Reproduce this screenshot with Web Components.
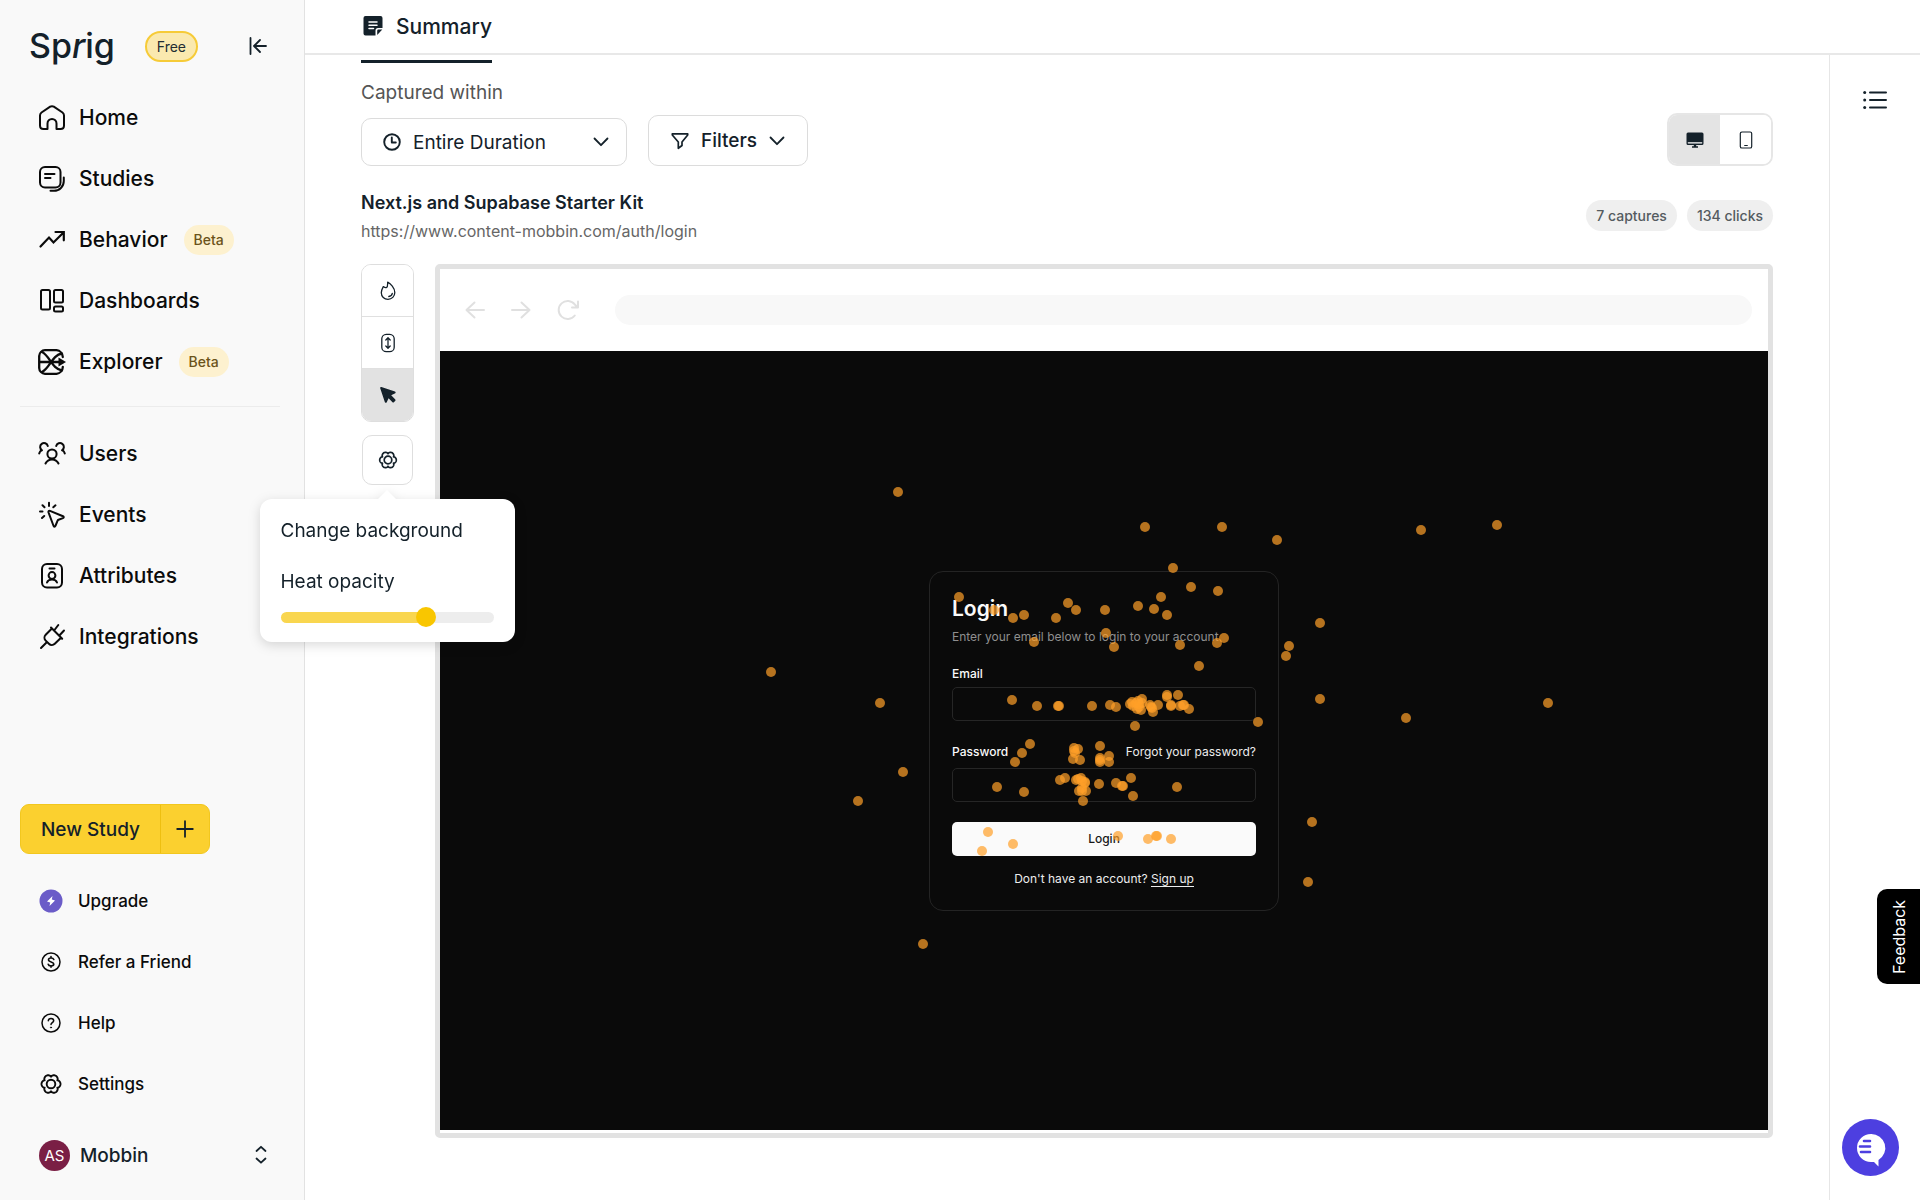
<!DOCTYPE html>
<html lang="en">
<head>
<meta charset="utf-8">
<meta name="viewport" content="width=device-width, initial-scale=1">
<title>Sprig – Summary</title>
<style>
  html, body { margin: 0; }
  body { font-family: Inter, "Liberation Sans", sans-serif; color: #14212a; background: #fff; }
</style>
</head>
<body>
<sprig-app></sprig-app>

<script>
/* Six-lobed outline shared by every settings icon. */
function gearPath(c, radius, wave) {
  let d = '';
  for (let i = 0; i < 120; i++) {
    const t = i * Math.PI / 60;
    const r = radius + wave * Math.pow(Math.abs(Math.cos(3 * t)), .7);
    d += (i ? 'L' : 'M') + (c + r * Math.cos(t)).toFixed(2) + ' ' + (c + r * Math.sin(t)).toFixed(2);
  }
  return d + 'Z';
}

/* name: [viewBox width, viewBox height, stroke width, markup] */
const ICONS = {
  home: [26, 26, 2, '<path d="M1 10.6Q1 8.6 2.5 7.5L11.2 1.7Q13 .6 14.8 1.7L23.5 7.5Q25 8.6 25 10.6V20.5Q25 24 21.500 24H17.500V18.500A4.500 4.500 0 0 0 8.500 18.500V24H4.500Q1 24 1 20.500Z"/>'],
  studies: [26, 26, 2, '<rect x="1" y="1" width="20.500" height="20.500" rx="5"/><path d="M6 8H15.500M6 12H11.500M24.800 11.500V15A9.800 9.800 0 0 1 15 24.800H11.500"/>'],
  behavior: [26, 26, 2.2, '<path stroke-linejoin="miter" d="M1.500 19.500L10 10.500L14.500 15.500L24 6M16.500 5H24.800V13.300"/>'],
  dashboards: [26, 26, 2, '<rect x="2" y="2" width="9" height="19.500" rx="1.500"/><rect x="15" y="2" width="9" height="12.500" rx="1.500"/><rect x="15" y="18.500" width="9" height="5" rx="1.500"/>'],
  explorer: [28, 26, 2.3, '<path d="M24.800 8A7 7 0 0 0 18.500 1.200H7A6 6 0 0 0 1.200 7V19A6 6 0 0 0 7 24.800H18.500A7 7 0 0 0 24.800 18M1.200 13H22M4 3C12 7 14 20 24 21.500M4 23C12 19 14 6 24 4.500"/><path fill="currentColor" stroke="none" d="M20.500 8.500L28 13L20.500 17.500Z"/>'],
  users: [28, 26, 2, '<circle cx="14" cy="13" r="4.600"/><path d="M7.500 22.500C10 17 18 17 20.500 22.500M1.200 12.500C1.600 10.500 2.500 9.700 4 9.300A3.900 3.900 0 1 1 9.800 5M26.800 12.500C26.400 10.500 25.500 9.700 24 9.300A3.900 3.900 0 1 0 18.200 5"/>'],
  events: [26, 26, 2, '<path d="M9.500 10.300C9.200 9.200 10 8.500 11 8.900L24 14.200C25 14.700 25 15.700 24 16.100L19.500 17.700C19 17.900 18.800 18.100 18.600 18.600L16.600 23.500C16 25 14.800 25 14.400 23.500ZM1 9.500H3.500M3.500 3.300L5.500 5.200M10 .8V4M16.500 3.300L14.300 5.300M3 16L5.200 14"/>'],
  attributes: [26, 26, 2, '<rect x="3" y="1" width="20" height="23.500" rx="5"/><path d="M10.500 5.500H15.500M8 19.500C9.500 15.500 16.500 15.500 18 19.500"/><circle cx="13" cy="12.500" r="3.400"/>'],
  integrations: [26, 26, 2, '<path d="M12 3.500L23.200 14.700M12.900 4.500L6.700 10.700A4.200 4.200 0 0 0 6.700 16.600L9.900 19.800A4.200 4.200 0 0 0 15.800 19.800L22 13.800M2 24L7.500 18.500M15.500 6L19.300 1M20.800 11L25 6.500"/>'],
  collapse: [18, 18, 1.800, '<path d="M1.500 1V17M17 9H5.500M11 3L5 9L11 15"/>'],
  upgrade: [24, 24, 0, '<circle cx="12" cy="12" r="11.500" fill="#6b5cc8"/><path fill="#fff" d="M13.500 7L8 12.500L11.200 13.500L10.500 17L16 11.500L12.800 10.500Z"/>'],
  refer: [24, 24, 1.500, '<circle cx="12" cy="12" r="9"/><path stroke-width="1.600" d="M14.800 9.500C14 7.300 9.500 7.500 9.500 9.800C9.500 12.500 14.800 11.300 14.800 14C14.800 16.500 9.800 16.700 9.200 14.300M12 6.500V8M12 15.800V17.300"/>'],
  help: [24, 24, 1.500, '<circle cx="12" cy="12" r="9"/><path d="M9.300 9.800C9.500 6.500 14.700 6.800 14.700 9.700C14.700 11.500 12 11.800 12 13.500"/><circle cx="12" cy="16.500" r=".6" fill="currentColor" stroke-width=".8"/>'],
  settings: [24, 24, 1.900, '<path d="' + gearPath(12, 7.300, 2.200) + '"/><circle cx="12" cy="12" r="4.300"/>'],
  gear: [20, 20, 1.700, '<path d="' + gearPath(10, 6.300, 2) + '"/><circle cx="10" cy="10" r="3.800"/>'],
  updown: [12, 20, 1.800, '<path d="M1.500 6L6 1.800L10.500 6M1.500 13.500L6 17.700L10.500 13.500"/>'],
  plus: [18, 18, 1.800, '<path d="M9 1.200V16.800M1.200 9H16.800"/>'],
  note: [20, 20, 0, '<path fill="currentColor" d="M2.500 0H17.500Q19.500 0 19.500 2V12H15Q12.500 12 12.500 14.500V19.500H2.500Q.5 19.500 .5 17.500V2Q.5 0 2.500 0ZM14.200 19V14.800Q14.200 13.600 15.400 13.600H19.300Z"/><path stroke="#fff" stroke-width="1.500" d="M6 6H14M6 9.300H14M6 12.600H10.500"/>'],
  clock: [18, 18, 1.900, '<circle cx="9" cy="9" r="7.800"/><path d="M8.800 4.500V9.500H12.800"/>'],
  chevron: [16, 10, 1.800, '<path d="M1.500 1.500L8 8.200L14.500 1.500"/>'],
  funnel: [18, 18, 1.700, '<path d="M1.300 1.800H16.700V3L11 10V13.500L7.300 16.300V10L1.300 3Z"/>'],
  desktop: [18, 18, 0, '<path fill="currentColor" d="M2 1.500H16Q17.500 1.500 17.500 3V12.500Q17.500 14 16 14H10.200V15.300H12V16.800H6V15.300H7.800V14H2Q.5 14 .5 12.500V3Q.5 1.500 2 1.500Z"/><path stroke="#fff" stroke-width="1.300" d="M2.300 11.800H15.700"/>'],
  phone: [18, 18, 1.200, '<rect x="3.300" y="1" width="11.400" height="16" rx="1.600"/><path d="M7.700 14.500H10.300"/>'],
  flame: [18, 20, 1.300, '<path d="M4.300 5.600C5.500 6.500 6.700 7 7.600 6.500C9 5.500 8.500 2.800 8.700 1.200C11.500 2.500 15.800 7 15.800 11.500C15.800 15.500 12.800 18.300 9 18.300C5.200 18.300 2.300 15.500 2.300 11.800C2.300 9.500 3.200 7.600 4.300 5.600ZM9.800 15.500C11.800 15.300 13 14.200 13.300 12.400"/>'],
  scroll: [18, 20, 1.300, '<rect x="2.800" y="1.300" width="12.400" height="17.400" rx="4.500"/><path d="M9 5.200V14.800M6.800 7L9 4.800L11.200 7M6.800 13L9 15.200L11.200 13"/>'],
  cursor: [18, 18, 0, '<path fill="currentColor" d="M1.200 2.200Q.9 .8 2.400 1L16 5.600Q17.300 6.300 16.300 7.300L12.200 9.300L16.300 13.400Q16.900 14.200 16.300 14.800L14.900 16.200Q14.200 16.800 13.500 16.200L9.600 12.300L7.600 16.400Q6.800 17.300 5.900 16.200Z"/>'],
  back: [20, 18, 2, '<path d="M19 9H1.500M9.500 1.500L1.500 9L9.500 16.500"/>'],
  forward: [20, 18, 2, '<path d="M1 9H18.500M10.500 1.500L18.500 9L10.500 16.500"/>'],
  reload: [22, 20, 2, '<path d="M17.800 15.500A9 9 0 1 1 17.800 4.500L20 6.700M21 1.500V7.500H15"/>'],
  list: [24, 20, 2, '<path d="M7 2.500H23M7 10H23M7 17.500H23"/><g fill="currentColor" stroke="none"><circle cx="1.700" cy="2.500" r="1.500"/><circle cx="1.700" cy="10" r="1.500"/><circle cx="1.700" cy="17.500" r="1.500"/></g>'],
  chat: [30, 34, 0, '<path fill="#fff" d="M15 1A14 14 0 0 1 22.500 27V33.500L18 29H15A14 14 0 0 1 15 1Z"/><path stroke="#4d3fe0" stroke-width="2.600" d="M8 8H14M4 13.500H14M5 19H14"/>']
};

function define(name, html, setup) {
  const template = document.createElement('template');
  template.innerHTML = html;
  customElements.define(name, class extends HTMLElement {
    constructor() {
      super();
      this.attachShadow({ mode: 'open' }).append(template.content.cloneNode(true));
    }
    connectedCallback() {
      if (setup && !this.ready) { this.ready = true; setup(this, this.shadowRoot); }
    }
  });
}

define('ui-icon', `<style>
  :host { display: inline-flex; flex: none; }
  svg { display: block; overflow: visible; }
</style>`, (host, root) => {
  const [w, h, stroke, markup] = ICONS[host.getAttribute('name')];
  root.innerHTML += `<svg width="${w}" height="${h}" viewBox="0 0 ${w} ${h}" fill="none" stroke="${stroke ? 'currentColor' : 'none'}" stroke-width="${stroke}" stroke-linecap="round" stroke-linejoin="round" aria-hidden="true">${markup}</svg>`;
});

define('nav-link', `<style>
  :host { display: block; }
  a { display: flex; align-items: center; height: 61px; padding-left: 39px; gap: 14px; color: #0b0b0b; text-decoration: none; font-size: 21px; font-weight: 500; }
  .glyph { display: flex; justify-content: center; width: 26px; }
  :host([small]) a { font-size: 17px; gap: 15px; }
  :host([small]) .glyph { width: 24px; }
  .badge { padding: 0 10px; line-height: 30px; border-radius: 15px; background: #fdf1cf; color: #6b531a; font-size: 14px; margin-left: 2px; }
</style>
<a href="#"><span class="glyph"><slot name="icon"></slot></span><slot></slot></a>`, (host, root) => {
  const badge = host.getAttribute('badge');
  if (badge) {
    const el = document.createElement('span');
    el.className = 'badge';
    el.textContent = badge;
    root.querySelector('a').append(el);
  }
});

define('brand-header', `<style>
  :host { display: flex; align-items: center; height: 32px; padding: 30px 37px 25px 29px; }
  .logo { color: #14212a; text-decoration: none; font-size: 34px; line-height: 32px; font-weight: 500; }
  .logo i { font-weight: 500; }
  .plan { margin-left: 30px; box-sizing: border-box; height: 31px; line-height: 28px; padding: 0 10px; border: 2px solid #f6cb38; border-radius: 16px; background: #fae9af; font-size: 14px; color: #222c33; }
  button { margin-left: auto; padding: 0; border: 0; background: none; color: #14212a; display: flex; }
</style>
<a class="logo" href="#">Sp<i>r</i>ig</a><span class="plan">Free</span>
<button aria-label="Collapse sidebar"><ui-icon name="collapse"></ui-icon></button>`);

define('new-study', `<style>
  :host { display: flex; align-self: flex-start; margin: 0 20px 16px; border: 1px solid #f2c71e; border-radius: 9px; background: #fbd02f; overflow: hidden; }
  button { height: 48px; border: 0; background: none; font: 500 19px Inter, sans-serif; color: #14212a; display: flex; align-items: center; justify-content: center; padding: 0; }
  .main { width: 139px; }
  .more { width: 49px; border-left: 1px solid #eebf10; }
</style>
<button class="main">New Study</button><button class="more" aria-label="More study types"><ui-icon name="plus"></ui-icon></button>`);

define('account-row', `<style>
  :host { display: block; padding-bottom: 4px; }
  button { width: 100%; height: 82px; display: flex; align-items: center; padding: 0 37px 0 39px; border: 0; background: none; font: 500 19px Inter, sans-serif; color: #14212a; }
  .avatar { width: 31px; line-height: 31px; border-radius: 50%; background: #7a1f45; color: #fff; font-size: 15px; font-weight: 400; margin-right: 10px; }
  ui-icon { margin-left: auto; }
</style>
<button><span class="avatar">AS</span><slot></slot><ui-icon name="updown"></ui-icon></button>`);

define('side-bar', `<style>
  :host { display: flex; flex-direction: column; position: sticky; top: 0; height: 100vh; min-height: 1080px; width: 304px; flex: none; background: #f9f9f9; border-right: 1px solid #e2e2e2; }
  hr { margin: 14px 24px 16px 20px; border: 0; border-top: 1px solid #ececec; }
  footer { margin-top: auto; display: flex; flex-direction: column; }
</style>
<brand-header></brand-header>
<nav>
  <nav-link><ui-icon slot="icon" name="home"></ui-icon>Home</nav-link>
  <nav-link><ui-icon slot="icon" name="studies"></ui-icon>Studies</nav-link>
  <nav-link badge="Beta"><ui-icon slot="icon" name="behavior"></ui-icon>Behavior</nav-link>
  <nav-link><ui-icon slot="icon" name="dashboards"></ui-icon>Dashboards</nav-link>
  <nav-link badge="Beta"><ui-icon slot="icon" name="explorer"></ui-icon>Explorer</nav-link>
  <hr>
  <nav-link><ui-icon slot="icon" name="users"></ui-icon>Users</nav-link>
  <nav-link><ui-icon slot="icon" name="events"></ui-icon>Events</nav-link>
  <nav-link><ui-icon slot="icon" name="attributes"></ui-icon>Attributes</nav-link>
  <nav-link><ui-icon slot="icon" name="integrations"></ui-icon>Integrations</nav-link>
</nav>
<footer>
  <new-study></new-study>
  <nav-link small><ui-icon slot="icon" name="upgrade"></ui-icon>Upgrade</nav-link>
  <nav-link small><ui-icon slot="icon" name="refer"></ui-icon>Refer a Friend</nav-link>
  <nav-link small><ui-icon slot="icon" name="help"></ui-icon>Help</nav-link>
  <nav-link small><ui-icon slot="icon" name="settings"></ui-icon>Settings</nav-link>
  <account-row>Mobbin</account-row>
</footer>`);

define('tab-bar', `<style>
  :host { display: block; height: 53px; border-bottom: 2px solid #e8e8e8; padding-left: 56px; }
  a { display: inline-flex; align-items: center; box-sizing: border-box; height: 63px; padding: 0 0 8px 2px; gap: 13px; border-bottom: 3px solid #14212a; color: #14212a; text-decoration: none; font-size: 21px; font-weight: 500; }
</style>
<a href="#"><ui-icon name="note"></ui-icon><slot></slot></a>`);

define('device-toggle', `<style>
  :host { display: flex; border: 2px solid #e6e6e6; border-radius: 10px; overflow: hidden; }
  button { width: 51px; height: 49px; border: 0; padding: 0; background: #fff; color: #14212a; display: flex; align-items: center; justify-content: center; }
  button[aria-pressed=true] { background: #e4e4e4; }
</style>
<button aria-pressed="true" aria-label="Desktop"><ui-icon name="desktop"></ui-icon></button><button aria-pressed="false" aria-label="Mobile"><ui-icon name="phone"></ui-icon></button>`);

define('filter-bar', `<style>
  :host { display: flex; align-items: flex-end; gap: 21px; }
  .field { display: flex; flex-direction: column; gap: 14px; }
  label { font-size: 19px; line-height: 22px; color: #555; }
  .select { display: grid; grid-template-columns: 22px 18px 1fr 16px 18px; align-items: center; width: 266px; height: 48px; }
  .select ui-icon { grid-row: 1; z-index: 1; pointer-events: none; }
  .clock { grid-column: 2; } .arrow { grid-column: 4; }
  select, .filters { box-sizing: border-box; border: 1px solid #dcdcdc; border-radius: 10px; background: #fff; }
  select { appearance: none; grid-row: 1; grid-column: 1 / -1; width: 100%; height: 48px; padding: 0 44px 0 51px; font: 400 19px Inter, sans-serif; color: #14212a; }
  .filters { display: flex; align-items: center; height: 51px; padding: 0 22px; gap: 12px; font: 500 19px Inter, sans-serif; color: #14212a; }
  device-toggle { margin-left: auto; }
</style>
<div class="field">
  <label for="duration">Captured within</label>
  <div class="select">
    <ui-icon class="clock" name="clock"></ui-icon>
    <select id="duration"><option>Entire Duration</option></select>
    <ui-icon class="arrow" name="chevron"></ui-icon>
  </div>
</div>
<button class="filters"><ui-icon name="funnel"></ui-icon>Filters<ui-icon name="chevron"></ui-icon></button>
<device-toggle></device-toggle>`);

define('page-heading', `<style>
  :host { display: flex; align-items: center; gap: 10px; padding: 23px 0 19px; }
  .names { flex: 1; line-height: 28px; }
  h1 { margin: 0; font-size: 18px; line-height: 28px; font-weight: 600; color: #14212a; }
  a { display: block; font-size: 16px; color: #666; text-decoration: none; }
  ::slotted(span) { line-height: 31px; margin-bottom: 4px; padding: 0 10px; border-radius: 16px; background: #efefef; color: #545b60; font-size: 14px; font-weight: 500; }
</style>
<div class="names"><h1>Next.js and Supabase Starter Kit</h1><a href="#">https://www.content-mobbin.com/auth/login</a></div>
<slot></slot>`);

define('settings-popover', `<style>
  :host { display: block; box-sizing: border-box; width: 255px; height: 143px; padding: 18px 21px; border-radius: 12px; background: #fff; color: #14212a; font-size: 19px; filter: drop-shadow(0 3px 6px rgba(0, 0, 0, .15)); }
  :host::before { content: ""; position: absolute; left: 50%; top: -9px; margin-left: -10px; border: 10px solid transparent; border-top: 0; border-bottom-color: #fff; }
  a { color: inherit; text-decoration: none; display: block; line-height: 28px; margin-bottom: 23px; }
  label { display: block; line-height: 28px; margin-bottom: 11px; }
  input { appearance: none; display: block; width: 100%; height: 20px; margin: 0; background: none; }
  input::-webkit-slider-runnable-track { height: 11px; border-radius: 6px; background: linear-gradient(to right, #f9d64f 68%, #ededed 68%); }
  input::-webkit-slider-thumb { appearance: none; width: 20px; height: 20px; margin-top: -5px; border-radius: 50%; background: #f9c600; }
</style>
<a href="#">Change background</a>
<label for="heat">Heat opacity</label>
<input id="heat" type="range" min="0" max="100" value="70">`);

define('tool-rail', `<style>
  :host { display: flex; flex-direction: column; align-items: center; gap: 13px; width: 53px; flex: none; position: relative; z-index: 2; }
  button { display: flex; align-items: center; justify-content: center; padding: 0; border: 0; background: #fff; color: #14212a; box-sizing: border-box; }
  .group { border: 1px solid #dedede; border-radius: 10px; overflow: hidden; }
  .group button { width: 51px; height: 52px; border-bottom: 1px solid #e0e0e0; }
  .group button:last-child { border: 0; }
  .group button[aria-pressed=true] { background: #e2e2e2; }
  .anchor { position: relative; }
  .anchor > button { width: 51px; height: 50px; border: 1px solid #dedede; border-radius: 10px; }
  settings-popover { position: absolute; top: 64px; left: 50%; margin-left: -128px; }
</style>
<div class="group">
  <button aria-label="Heatmap"><ui-icon name="flame"></ui-icon></button>
  <button aria-label="Scroll map"><ui-icon name="scroll"></ui-icon></button>
  <button aria-label="Click map" aria-pressed="true"><ui-icon name="cursor"></ui-icon></button>
</div>
<div class="anchor">
  <button aria-label="Map settings"><ui-icon name="gear"></ui-icon></button>
  <settings-popover></settings-popover>
</div>`);

define('login-card', `<style>
  :host { display: block; box-sizing: border-box; width: 350px; padding: 23px 22px 22px; border: 1px solid #242424; border-radius: 14px; color: #ededed; font-size: 12px; line-height: 18px; }
  h2 { margin: 0; font-size: 21px; line-height: 28px; font-weight: 600; color: #fafafa; }
  p { margin: 5px 0 19px; color: #8f8f8f; white-space: nowrap; }
  .row { display: flex; justify-content: space-between; }
  label { font-weight: 500; color: #fafafa; }
  a { color: inherit; text-decoration: none; }
  input { display: block; box-sizing: border-box; width: 100%; height: 34px; margin: 4px 0 22px; border: 1px solid #262626; border-radius: 5px; background: transparent; color: #fff; }
  .row + input { margin: 7px 0 20px; }
  button { display: block; width: 100%; height: 34px; border: 0; border-radius: 5px; background: #fafafa; color: #171717; font: 500 12px Inter, sans-serif; }
  .foot { text-align: center; margin: 14px 0 0; color: #ededed; }
  .foot a { border-bottom: 1px solid #ededed; }
</style>
<h2>Login</h2>
<p>Enter your email below to login to your account</p>
<label for="email">Email</label><input id="email" type="email">
<div class="row"><label for="pw">Password</label><a href="#">Forgot your password?</a></div><input id="pw" type="password">
<button>Login</button>
<p class="foot">Don't have an account? <a href="#">Sign up</a></p>`);

/* Recorded clicks, as offsets from the centre of the captured page. */
const CLICKS = [
  [-206,-248],[41,-213],[118,-213],[173,-200],[317,-210],[393,-215],[216,-117],[216,-41],[444,-37],[302,-22],
  [-333,-68],[-224,-37],[-201,32],[-246,61],[208,82],[204,142],[-181,204],
  [69,-172],[87,-153],[114,-149],[-145,-143],[-110,-130],[-91,-122],[-80,-125],[-48,-122],[-36,-137],[-28,-130],[1,-130],
  [34,-134],[50,-131],[57,-143],[63,-125],[-70,-98],[2,-107],[10,-93],[76,-95],[113,-97],[120,-102],[95,-74],[185,-94],[182,-84],
  [-92,-40],[-67,-34],[-46,-34],[-45,-34],[-12,-34],[6,-35],[12,-33],
  [26,-36],[28,-38],[29,-34],[32,-37],[34,-39],[38,-41],[38,-37],[35,-36],[35,-33],[37,-30],[33,-31],[46,-35],[47,-33],[48,-32],[49,-28],[54,-35],
  [63,-45],[63,-43],[74,-45],[67,-35],[67,-34],[76,-34],[79,-35],[80,-35],[85,-31],[31,-14],[154,-18],
  [-74,4],[-82,13],[-89,22],[-107,47],[-80,52],
  [-30,8],[-26,9],[-29,13],[-30,11],[-31,19],[-24,20],[-4,6],[-4,18],[-4,20],[-4,22],[5,16],[5,22],
  [-44,40],[-39,38],[-28,40],[-26,39],[-23,38],[-22,41],[-19,42],[-19,43],[-25,51],[-22,51],[-22,48],[-18,51],[-21,61],
  [-5,44],[12,43],[18,46],[19,46],[27,38],[29,56],[73,47],
  [-116,92],[-122,111],[-91,104],[14,96],[44,99],[52,96],[53,96],[67,99]
];

define('click-map', `<style>
  :host { display: flex; align-items: center; justify-content: center; position: relative; overflow: hidden; background: #0a0a0a; aspect-ratio: 1328 / 779; min-height: 400px; }
  i { position: absolute; width: 10px; height: 10px; margin: -6px 0 0 -5px; border-radius: 50%; background: rgba(255, 159, 40, .7); pointer-events: none; }
</style>
<login-card></login-card>`, (host, root) => {
  for (const [x, y] of CLICKS) {
    const dot = document.createElement('i');
    dot.style.left = `calc(50% + ${x}px)`;
    dot.style.top = `calc(50% + ${y}px)`;
    root.append(dot);
  }
});

define('browser-frame', `<style>
  :host { display: block; flex: 1; min-width: 0; border: 5px solid #e2e2e2; border-radius: 5px; padding-bottom: 3px; }
  header { display: flex; align-items: center; height: 82px; padding: 0 16px 0 25px; color: #e0e0e0; gap: 26px; }
  .address { flex: 1; height: 30px; margin-left: 10px; border-radius: 15px; background: #f8f8f8; }
</style>
<header><ui-icon name="back"></ui-icon><ui-icon name="forward"></ui-icon><ui-icon name="reload"></ui-icon><div class="address"></div></header>
<slot></slot>`);

define('side-rail', `<style>
  :host { display: block; box-sizing: border-box; width: 91px; flex: none; border-left: 1px solid #e6e6e6; padding: 35px 33px; }
  button { border: 0; padding: 0; background: none; color: #14212a; display: flex; }
</style>
<button aria-label="Contents"><ui-icon name="list"></ui-icon></button>`);

define('feedback-tab', `<style>
  :host { display: block; position: fixed; right: 0; bottom: 216px; z-index: 5; }
  button { display: block; width: 43px; height: 95px; padding: 0; border: 0; border-radius: 0 10px 10px 0; background: #000; color: #fff; font: 400 16px Inter, sans-serif; writing-mode: vertical-rl; transform: rotate(180deg); }
</style>
<button><slot></slot></button>`);

define('chat-launcher', `<style>
  :host { display: block; position: fixed; right: 21px; bottom: 24px; z-index: 5; }
  button { width: 57px; height: 57px; padding: 4px 0 0; border: 0; border-radius: 50%; background: #4d3fe0; display: flex; align-items: center; justify-content: center; }
</style>
<button aria-label="Open chat"><ui-icon name="chat"></ui-icon></button>`);

define('sprig-app', `<style>
  :host { display: flex; align-items: flex-start; min-height: 100vh; }
  .page { flex: 1; min-width: 0; min-height: 100vh; display: flex; flex-direction: column; }
  .body { flex: 1; display: flex; }
  main { flex: 1; min-width: 0; padding: 27px 56px 60px; }
  .workspace { display: flex; align-items: flex-start; gap: 21px; }
</style>
<side-bar></side-bar>
<div class="page">
  <tab-bar>Summary</tab-bar>
  <div class="body">
    <main>
      <filter-bar></filter-bar>
      <page-heading><span>7 captures</span><span>134 clicks</span></page-heading>
      <div class="workspace">
        <tool-rail></tool-rail>
        <browser-frame><click-map></click-map></browser-frame>
      </div>
    </main>
    <side-rail></side-rail>
  </div>
</div>
<feedback-tab>Feedback</feedback-tab>
<chat-launcher></chat-launcher>`);
</script>
</body>
</html>
